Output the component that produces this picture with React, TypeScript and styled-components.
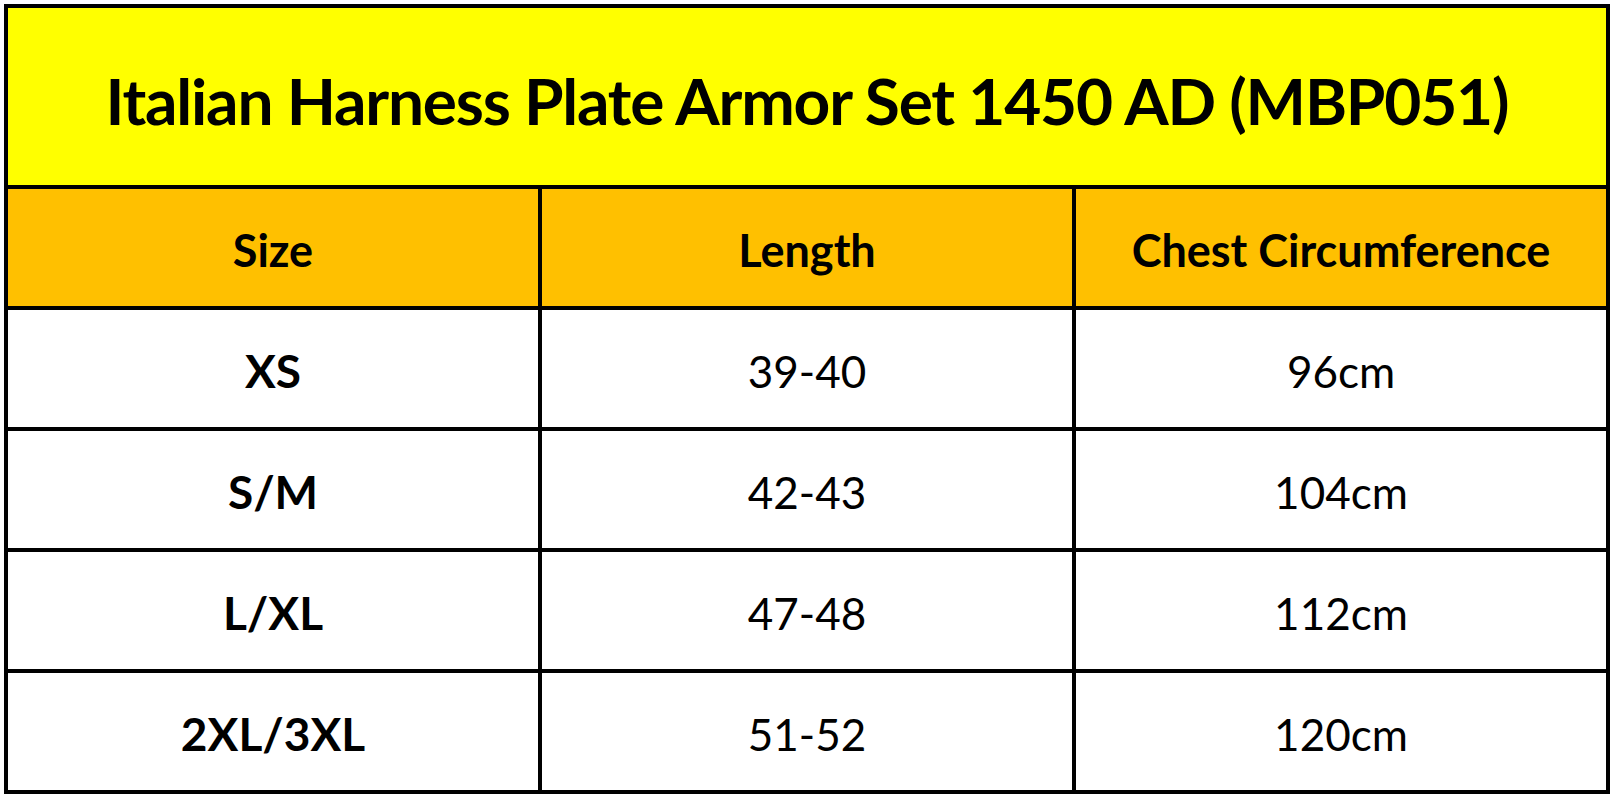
import React from 'react';
import styled, { createGlobalStyle } from 'styled-components';

const GlobalStyle = createGlobalStyle`
  html, body {
    margin: 0;
    padding: 0;
    background: #ffffff;
  }
  body {
    font-family: Lato, "Open Sans", sans-serif;
    color: #000000;
  }
`;

const Page = styled.div`
  padding: 4px;
`;

const Table = styled.div`
  display: grid;
  grid-template-columns: repeat(3, 530px);
  grid-template-rows: 177px repeat(5, 117px);
  gap: 4px;
  padding: 4px;
  width: fit-content;
  background: #000000;
`;

const Title = styled.div`
  grid-column: 1 / -1;
  display: flex;
  align-items: center;
  justify-content: center;
  padding-top: 8px;
  background: #ffff00;
  font-size: 64px;
  font-weight: 700;
  letter-spacing: -1.2px;
`;

const Cell = styled.div<{ $head?: boolean; $bold?: boolean }>`
  display: flex;
  align-items: center;
  justify-content: center;
  padding-top: 4px;
  background: ${(p) => (p.$head ? '#ffc000' : '#ffffff')};
  font-size: ${(p) => (p.$head ? '45px' : p.$bold ? '46px' : '44px')};
  font-weight: ${(p) => (p.$head || p.$bold ? 700 : 400)};
`;

const rows = [
  { size: 'XS', length: '39-40', chest: '96cm' },
  { size: 'S/M', length: '42-43', chest: '104cm' },
  { size: 'L/XL', length: '47-48', chest: '112cm' },
  { size: '2XL/3XL', length: '51-52', chest: '120cm' },
];

export default function App() {
  return (
    <>
      <GlobalStyle />
      <Page>
        <Table>
          <Title>Italian Harness Plate Armor Set 1450 AD (MBP051)</Title>
          <Cell $head>Size</Cell>
          <Cell $head>Length</Cell>
          <Cell $head>Chest Circumference</Cell>
          {rows.map((r) => (
            <React.Fragment key={r.size}>
              <Cell $bold>{r.size}</Cell>
              <Cell>{r.length}</Cell>
              <Cell>{r.chest}</Cell>
            </React.Fragment>
          ))}
        </Table>
      </Page>
    </>
  );
}
